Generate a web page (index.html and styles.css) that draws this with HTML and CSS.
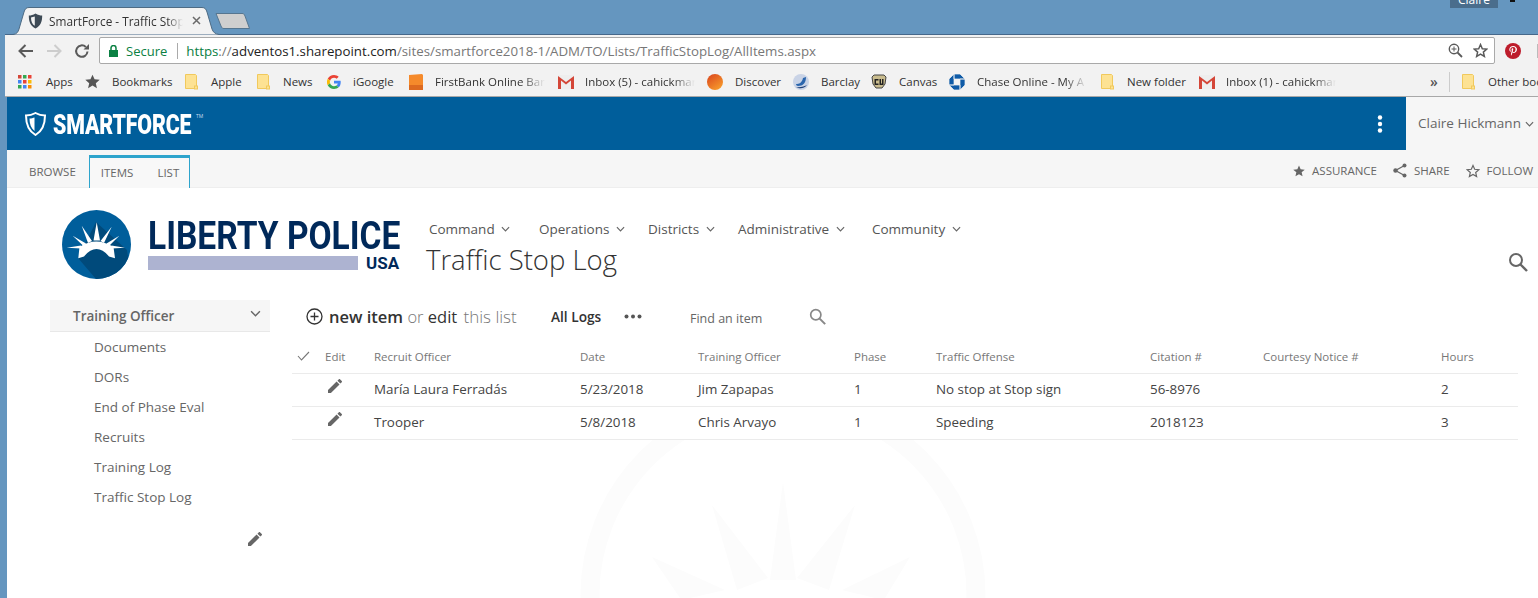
FILE: index.html

```html
<!DOCTYPE html>
<html lang="en">
<head>
<meta charset="UTF-8">
<title>SmartForce - Traffic Stop Log</title>
<link rel="stylesheet" href="styles.css">
</head>
<body>
<svg class="defs" width="0" height="0">
  <symbol id="pencil" viewBox="3 3 18 18"><path d="M3 17.25V21h3.75L17.81 9.94l-3.75-3.75L3 17.25zM20.71 7.04c.39-.39.39-1.02 0-1.41l-2.34-2.34c-.39-.39-1.02-.39-1.41 0l-1.83 1.83 3.75 3.75 1.83-1.83z"/></symbol>
  <symbol id="folder" viewBox="0 0 13 16"><path d="M.5.5h10l1 1v13h-11z" fill="#fde293" stroke="#f1c95c"/><rect x="9.5" y="12" width="3" height="3" fill="#fde293" stroke="#f1c95c"/></symbol>
  <symbol id="gmail" viewBox="0 0 16 14"><path d="M0 0h16v14H0z" fill="#eee"/><path d="M0 14V1l8 6 8-6v13h-3V5.500L8 9.500 3 5.500V14z" fill="#d44638"/></symbol>
  <symbol id="chev" viewBox="0 0 10 6"><path d="M1 1l4 4 4-4" fill="none" stroke="currentColor" stroke-width="1.300"/></symbol>
  <symbol id="lens" viewBox="0 0 20 20"><circle cx="8" cy="8" r="6" fill="none" stroke="currentColor" stroke-width="2"/><path d="M12.500 12.500L19 19" stroke="currentColor" stroke-width="2.400"/></symbol>
</svg>

<div class="tabstrip">
  <div class="tab">
    <svg class="tab-shape" width="206" height="28" viewBox="0 0 206 28"><path d="M0 27.500C4 27 5 25 6 22L11 5C12 2 13 .5 16 .5H189C192 .5 193 2 194 5L199 22C200 25 202 27 206 27.500" fill="#f2f2f2" stroke="#4d6b84"/></svg>
    <svg class="favicon" width="15" height="16" viewBox="0 0 15 16"><path d="M7.500.5C5 2 3 2.500.8 2.500.8 9 2.500 13 7.500 15.500 12.500 13 14.200 9 14.200 2.500 12 2.500 10 2 7.500.5z" fill="#3d4a55"/><path d="M6.800 3.500C5.500 4 4.300 4.300 3 4.400 3 8.500 4.200 11 6.800 12.800z" fill="#f2f2f2"/></svg>
    <span class="tab-title">SmartForce - Traffic Stop</span>
    <svg class="tab-x" width="9" height="9" viewBox="0 0 9 9"><path d="M1 1l7 7M8 1L1 8" stroke="#6a6a6a" stroke-width="1.500"/></svg>
  </div>
  <svg class="newtab" width="36" height="18" viewBox="0 0 36 18"><path d="M1 1.500H27C29 1.500 29 2 30 4L34.500 16.500H9C7 16.500 7 16 6 14z" fill="#cfcfcf" stroke="#567690"/></svg>
  <div class="win-user">Claire</div>
  <div class="win-btn"></div>
</div>

<div class="toolbar">
  <svg class="nav-ic" width="16" height="14" viewBox="0 0 16 14"><path d="M15 7H2M7.500 1L1.500 7l6 6" fill="none" stroke="#5a5a5a" stroke-width="2"/></svg>
  <svg class="nav-ic" width="16" height="14" viewBox="0 0 16 14"><path d="M1 7h13M8.500 1l6 6-6 6" fill="none" stroke="#cdcdcd" stroke-width="2"/></svg>
  <svg class="nav-ic" width="16" height="16" viewBox="0 0 16 16"><path d="M13.500 8.500A5.700 5.700 0 1 1 11.800 4" fill="none" stroke="#5a5a5a" stroke-width="2"/><path d="M9.500 6.500H15V1z" fill="#5a5a5a"/></svg>
  <div class="omnibox">
    <svg class="lock" width="9" height="12" viewBox="0 0 9 12"><path d="M0 5h9v7H0z" fill="#0b8043"/><path d="M2 5V3a2.500 2.500 0 0 1 5 0v2" fill="none" stroke="#0b8043" stroke-width="1.500"/></svg>
    <span class="secure">Secure</span>
    <span class="omni-sep"></span>
    <span class="url"><span class="url-scheme">https</span>://<span class="url-host">adventos1.sharepoint.com</span>/sites/smartforce2018-1/ADM/TO/Lists/TrafficStopLog/AllItems.aspx</span>
    <svg class="omni-zoom" width="15" height="15" viewBox="0 0 15 15"><circle cx="6" cy="6" r="4.700" fill="none" stroke="#5a5a5a" stroke-width="1.400"/><path d="M9.500 9.500L14 14" stroke="#5a5a5a" stroke-width="1.800"/><path d="M3.500 6h5M6 3.500v5" stroke="#5a5a5a"/></svg>
    <svg class="omni-star" width="15" height="15" viewBox="0 0 24 24"><path d="M12 2.500l2.900 6.600 7.100.7-5.400 4.700 1.600 7-6.200-3.700-6.200 3.700 1.600-7L2 9.800l7.100-.7z" fill="none" stroke="#5a5a5a" stroke-width="2.400"/></svg>
  </div>
  <svg class="pin" width="16" height="16" viewBox="0 0 16 16"><circle cx="8" cy="8" r="8" fill="#bd1c2b"/><path d="M8.300 3C5.800 3 4.300 4.700 4.300 6.500c0 1 .5 1.900 1.200 2.200.3.100.4-.3.400-.6-.5-.6-.6-1-.6-1.500 0-1.500 1.200-2.600 2.800-2.600 1.500 0 2.400.9 2.400 2.200 0 1.600-.7 2.900-1.800 2.900-.6 0-1-.5-.9-1.100.2-.7.5-1.400.5-1.900 0-1.200-1.700-1-1.700.6 0 .5.200.9.200.9l-.8 3.100c-.1.700-.1 1.500 0 2 .5-.5 1-1.400 1.200-2.100l.4-1.400c.2.400.8.700 1.400.7 1.800 0 3-1.600 3-3.800C11.800 4.400 10.300 3 8.300 3z" fill="#fff"/></svg>
  <span class="ext"></span>
</div>

<div class="bookmarks">
  <div class="bm">
    <svg class="bm-ic" width="14" height="14" viewBox="0 0 14 14"><path d="M0 0h3.500v3.500H0z" fill="#d44638"/><path d="M5 0h3.500v3.500H5z" fill="#34a853"/><path d="M10 0h3.500v3.500H10z" fill="#ea4335"/><path d="M0 5h3.500v3.500H0z" fill="#4285f4"/><path d="M5 5h3.500v3.500H5z" fill="#ea4335"/><path d="M10 5h3.500v3.500H10z" fill="#fbbc05"/><path d="M0 10h3.500v3.500H0z" fill="#34a853"/><path d="M5 10h3.500v3.500H5z" fill="#4285f4"/><path d="M10 10h3.500v3.500H10z" fill="#fb8c00"/></svg>
    <span class="bm-text gap-apps">Apps</span>
  </div>
  <div class="bm">
    <svg class="bm-ic" width="15" height="15" viewBox="0 0 24 24"><path d="M12 1l3.300 7.500 8.200.8-6.200 5.400 1.800 8L12 18.500 4.900 22.700l1.800-8L.5 9.300l8.200-.8z" fill="#555"/></svg>
    <span class="bm-text">Bookmarks</span>
  </div>
  <div class="bm"><svg class="bm-ic" width="13" height="16"><use href="#folder"/></svg><span class="bm-text gap-wide">Apple</span></div>
  <div class="bm"><svg class="bm-ic" width="13" height="16"><use href="#folder"/></svg><span class="bm-text gap-wide">News</span></div>
  <div class="bm">
    <svg class="bm-ic" width="14" height="14" viewBox="0 0 48 48"><path d="M24 9.500c3.500 0 6.700 1.200 9.200 3.600l6.800-6.800C35.900 2.400 30.500 0 24 0 14.600 0 6.500 5.400 2.600 13.200l8 6.200C12.400 13.700 17.700 9.500 24 9.500z" fill="#ea4335"/><path d="M47 24.500c0-1.600-.1-3.100-.4-4.500H24v9h12.900c-.6 3-2.200 5.500-4.700 7.200l7.700 6C44.400 38 47 31.800 47 24.500z" fill="#4285f4"/><path d="M10.500 28.600a14.400 14.400 0 0 1 0-9.200l-8-6.200a24 24 0 0 0 0 21.600z" fill="#fbbc05"/><path d="M24 48c6.500 0 11.900-2.100 15.900-5.800l-7.700-6c-2.200 1.500-4.900 2.300-8.200 2.300-6.300 0-11.600-4.200-13.500-9.900l-8 6.200C6.500 42.600 14.600 48 24 48z" fill="#34a853"/></svg>
    <span class="bm-text">iGoogle</span>
  </div>
  <div class="bm">
    <svg class="bm-ic" width="15" height="16" viewBox="0 0 15 16"><path d="M1 1l13-1 1 1v15H1z" fill="#f58a2b"/><path d="M1 11h14v5H1z" fill="#dd6a20"/></svg>
    <span class="bm-text fade bw-first">FirstBank Online Ban</span>
  </div>
  <div class="bm"><svg class="bm-ic" width="16" height="14"><use href="#gmail"/></svg><span class="bm-text fade bw-inbox">Inbox (5) - cahickmar</span></div>
  <div class="bm">
    <svg class="bm-ic" width="16" height="16" viewBox="0 0 16 16"><defs><linearGradient id="disc" x1="0" y1="0" x2=".7" y2="1"><stop offset="0" stop-color="#d9431e"/><stop offset="1" stop-color="#f79a2a"/></linearGradient></defs><circle cx="8" cy="8" r="8" fill="url(#disc)"/></svg>
    <span class="bm-text">Discover</span>
  </div>
  <div class="bm">
    <svg class="bm-ic" width="16" height="16" viewBox="0 0 16 16"><circle cx="8" cy="8" r="8" fill="#c9d3e6"/><path d="M3 10c3 0 6-1 7-6l3-1c0 6-3 9-8 9-1 0-2-1-2-2z" fill="#2b66ad"/><path d="M3 13c3 2 8 2 11-2-2 1-7 3-11 2z" fill="#1c3f78"/></svg>
    <span class="bm-text">Barclay</span>
  </div>
  <div class="bm">
    <svg class="bm-ic" width="16" height="16" viewBox="0 0 16 16"><path d="M1 3l2-2h10l2 2-1 7-3 4H5l-3-4z" fill="#c9bc8e" stroke="#444"/><path d="M3.500 5h4v1.500H5v3h2.500V11h-4zM8.500 5h1.500v4.500h1V5h1.500v6h-4z" fill="#222"/></svg>
    <span class="bm-text">Canvas</span>
  </div>
  <div class="bm">
    <svg class="bm-ic" width="16" height="16" viewBox="0 0 16 16"><path d="M5 0H11L16 5H5zM16 5V11L11 16V5zM11 16H5L0 11H11zM0 11V5L5 0V11z" fill="#0f5ba7" stroke="#f2f2f2" stroke-width=".7"/></svg>
    <span class="bm-text fade bw-chase">Chase Online - My A</span>
  </div>
  <div class="bm"><svg class="bm-ic" width="13" height="16"><use href="#folder"/></svg><span class="bm-text gap-wide">New folder</span></div>
  <div class="bm"><svg class="bm-ic" width="16" height="14"><use href="#gmail"/></svg><span class="bm-text fade bw-inbox">Inbox (1) - cahickmar</span></div>
  <span class="bm-more">»</span>
  <span class="bm-sep"></span>
  <div class="bm"><svg class="bm-ic" width="13" height="16"><use href="#folder"/></svg><span class="bm-text gap-wide">Other book</span></div>
</div>

<div class="page">
  <svg class="watermark" width="500" height="158" viewBox="533 440 500 158">
    <circle cx="783" cy="595" r="193" fill="none" stroke="#fcfcfc" stroke-width="19"/>
    <path d="M783 482L796 580H770zM712 505L768 578 737 590zM855 505L829 590 797 578zM652 557L725 590 690 598H680zM910 557L885 598H875L842 590z" fill="#fcfcfc"/>
  </svg>

  <div class="suite-bar">
    <div class="suite-logo">
      <svg width="21" height="24" viewBox="0 0 21 24"><path d="M10.500 1C7 3 4 3.500 1 3.500 1 13 3.500 19 10.500 23 17.500 19 20 13 20 3.500 17 3.500 14 3 10.500 1z" fill="none" stroke="#fff" stroke-width="2"/><path d="M9.500 5.500C8 6 6.500 6.500 4.500 6.500 4.500 12 6 16 9.500 19z" fill="#fff"/></svg>
      <span class="suite-name">SMARTFORCE</span><span class="suite-tm">TM</span>
    </div>
    <svg class="suite-dots" width="6" height="18" viewBox="0 0 6 18"><circle cx="3" cy="2.500" r="2.200" fill="#fff"/><circle cx="3" cy="9" r="2.200" fill="#fff"/><circle cx="3" cy="15.500" r="2.200" fill="#fff"/></svg>
    <div class="suite-user">Claire Hickmann <svg class="user-chev" width="9" height="6"><use href="#chev"/></svg></div>
  </div>

  <div class="ribbon">
    <a class="rib-tab rib-browse">BROWSE</a>
    <div class="rib-group"><a class="rib-tab">ITEMS</a><a class="rib-tab">LIST</a></div>
    <div class="rib-actions">
      <a class="rib-act"><svg width="12" height="12" viewBox="0 0 24 24"><path d="M12 1l3.300 7.500 8.200.8-6.200 5.400 1.800 8L12 18.500 4.900 22.700l1.800-8L.5 9.300l8.200-.8z" fill="#666"/></svg>ASSURANCE</a>
      <a class="rib-act"><svg width="14" height="15" viewBox="0 0 14 15"><path d="M11.500 2.500L2.500 7.500l9 5" fill="none" stroke="#666" stroke-width="1.300"/><circle cx="11.500" cy="2.500" r="2" fill="#666"/><circle cx="2.500" cy="7.500" r="2.200" fill="#666"/><circle cx="11.500" cy="12.500" r="2" fill="#666"/></svg>SHARE</a>
      <a class="rib-act"><svg width="14" height="14" viewBox="0 0 24 24"><path d="M12 2.500l2.900 6.600 7.100.7-5.400 4.700 1.600 7-6.200-3.700-6.200 3.700 1.600-7L2 9.800l7.100-.7z" fill="none" stroke="#666" stroke-width="2"/></svg>FOLLOW</a>
    </div>
  </div>

  <div class="brand">
    <svg class="seal" width="69" height="69" viewBox="0 0 69 69">
      <defs><clipPath id="sealclip"><circle cx="34.500" cy="34.500" r="34.500"/></clipPath></defs>
      <circle cx="34.500" cy="34.500" r="34.500" fill="#005e9b"/>
      <path d="M34 12L65 40 69 69H34L16 48z" fill="#004a7b" clip-path="url(#sealclip)"/>
      <path d="M34.700 12.300L38 30.500H31.500zM19.700 15.700L30 31 26 33zM49.700 16.700L42 33 38.500 31zM10.700 25.700L24 33.500 21.500 36zM57.300 25.700L47 36 44.500 33.500zM4.700 37.700L19 35.500 19.500 38.500zM63 37.700L49.500 38.500 49.500 35.500z" fill="#fff"/>
      <path d="M17.500 37Q34 26 51.500 37L53 48.300 47 46.500Q41 39 34.500 39 28 39 22 46.500L16.300 48.300z" fill="#fff"/>
    </svg>
    <div class="lockup">
      <div class="lockup-name"><span>LIBERTY POLICE</span></div>
      <div class="lockup-sub"><span class="lockup-bar"></span><span class="lockup-usa">USA</span></div>
    </div>
    <div class="site-head">
      <nav class="topnav">
        <a>Command <svg width="9" height="6"><use href="#chev"/></svg></a>
        <a>Operations <svg width="9" height="6"><use href="#chev"/></svg></a>
        <a>Districts <svg width="9" height="6"><use href="#chev"/></svg></a>
        <a>Administrative <svg width="9" height="6"><use href="#chev"/></svg></a>
        <a>Community <svg width="9" height="6"><use href="#chev"/></svg></a>
      </nav>
      <h1 class="page-title">Traffic Stop Log</h1>
    </div>
    <svg class="site-search" width="20" height="20"><use href="#lens"/></svg>
  </div>

  <div class="content">
    <aside class="sidenav">
      <div class="side-head">Training Officer <svg width="11" height="7"><use href="#chev"/></svg></div>
      <a class="side-link">Documents</a>
      <a class="side-link">DORs</a>
      <a class="side-link">End of Phase Eval</a>
      <a class="side-link">Recruits</a>
      <a class="side-link">Training Log</a>
      <a class="side-link">Traffic Stop Log</a>
      <div class="side-edit"><svg width="14" height="14" fill="#666"><use href="#pencil"/></svg></div>
    </aside>

    <main class="list">
      <div class="list-tools">
        <svg class="plus" width="17" height="17" viewBox="0 0 17 17"><circle cx="8.500" cy="8.500" r="7.500" fill="none" stroke="#333" stroke-width="1.300"/><path d="M8.500 4.500v8M4.500 8.500h8" stroke="#333" stroke-width="1.300"/></svg>
        <span class="hero"><b>new item</b> <i>or</i> <span class="hero-edit">edit</span> <i class="hero-list">this list</i></span>
        <span class="view-name">All Logs</span>
        <svg class="view-more" width="18" height="5" viewBox="0 0 18 5"><circle cx="2.500" cy="2.500" r="2" fill="#555"/><circle cx="9" cy="2.500" r="2" fill="#555"/><circle cx="15.500" cy="2.500" r="2" fill="#555"/></svg>
        <span class="find">Find an item</span>
        <svg class="find-ic" width="17" height="17"><use href="#lens"/></svg>
      </div>
      <table class="grid">
        <thead>
          <tr>
            <th class="c-check"><svg width="13" height="10" viewBox="0 0 13 10"><path d="M1 5l3.500 4L12 1" fill="none" stroke="#777" stroke-width="1.100"/></svg></th>
            <th class="c-edit">Edit</th>
            <th class="c-recruit">Recruit Officer</th>
            <th class="c-date">Date</th>
            <th class="c-officer">Training Officer</th>
            <th class="c-phase">Phase</th>
            <th class="c-offense">Traffic Offense</th>
            <th class="c-citation">Citation #</th>
            <th class="c-notice">Courtesy Notice #</th>
            <th class="c-hours">Hours</th>
          </tr>
        </thead>
        <tbody>
          <tr>
            <td></td>
            <td class="pen"><svg width="14" height="14"><use href="#pencil"/></svg></td>
            <td>María Laura Ferradás</td>
            <td>5/23/2018</td>
            <td>Jim Zapapas</td>
            <td>1</td>
            <td>No stop at Stop sign</td>
            <td>56-8976</td>
            <td></td>
            <td>2</td>
          </tr>
          <tr>
            <td></td>
            <td class="pen"><svg width="14" height="14"><use href="#pencil"/></svg></td>
            <td>Trooper</td>
            <td>5/8/2018</td>
            <td>Chris Arvayo</td>
            <td>1</td>
            <td>Speeding</td>
            <td>2018123</td>
            <td></td>
            <td>3</td>
          </tr>
        </tbody>
      </table>
    </main>
  </div>
</div>
</body>
</html>
```

FILE: styles.css

```css
* { box-sizing: border-box; }
html, body { margin: 0; height: 598px; overflow: hidden; }
body { background: #6596bf; font-family: "Open Sans", "Noto Sans", sans-serif; color: #444; position: relative; }
a { color: inherit; text-decoration: none; }
.defs { position: absolute; }

/* browser chrome */
.tabstrip { height: 34px; display: flex; padding-left: 13px; }
.tab { position: relative; width: 204px; height: 28px; margin-top: 7px; display: flex; align-items: center; padding: 0 0 1px 15px; z-index: 2; }
.tab-shape { position: absolute; left: 0; top: 0; }
.favicon, .tab-title, .tab-x { position: relative; }
.tab-title { margin-left: 6px; font-size: 11.800px; color: #333; width: 134px; white-space: nowrap; overflow: hidden; -webkit-mask-image: linear-gradient(to right, #000 88%, transparent); mask-image: linear-gradient(to right, #000 88%, transparent); }
.tab-x { margin-left: 9px; }
.newtab { margin: 12px 0 0 -2px; }
.win-user { margin-left: auto; width: 48px; height: 8px; background: #4a6d8c; color: #fff; font-size: 12px; line-height: 0; text-align: center; }
.win-btn { width: 5px; height: 2px; background: #111; margin: 0 23px 0 12px; }

.toolbar { margin-left: 5px; height: 33px; background: #f2f2f2; border-top: 1px solid #46688a; display: flex; align-items: center; padding: 0 0 1px 13px; }
.nav-ic { margin-right: 12px; flex: none; }
.omnibox { margin-left: -3px; width: 1396px; height: 27px; background: #fff; border: 1px solid #a9a9a9; border-radius: 2px; display: flex; align-items: center; padding-left: 9px; flex: none; }
.lock { flex: none; }
.secure { margin-left: 8px; font-size: 13px; color: #0b8043; }
.omni-sep { width: 1px; height: 16px; background: #aaa; margin: 0 8px 0 10px; }
.url { font-size: 13.300px; color: #777; white-space: nowrap; }
.url-scheme { color: #0b8043; }
.url-host { color: #222; }
.omni-zoom { margin-left: auto; }
.omni-star { margin: 0 6px 0 10px; }
.pin { margin-left: 10px; flex: none; }
.ext { width: 2px; height: 14px; margin-left: 16px; background: #bbb; flex: none; }

.bookmarks { margin-left: 5px; height: 30px; background: #f2f2f2; border-bottom: 1px solid #a8a8a8; display: grid; grid-template-columns: 67px 100px 72px 70px 81px 150px 149px 86px 78px 78px 152px 98px 231px 19px 13px auto; align-items: center; padding: 0 0 0 13px; overflow: hidden; }
.bm { display: flex; align-items: center; white-space: nowrap; min-width: 0; }
.bm-ic { flex: none; }
.bm-text { margin-left: 12px; font-size: 11.500px; color: #333; }
.gap-apps { margin-left: 14px; }
.gap-wide { margin-left: 13px; }
.fade { overflow: hidden; -webkit-mask-image: linear-gradient(to right, #000 80%, transparent); mask-image: linear-gradient(to right, #000 80%, transparent); }
.bw-first { width: 110px; }
.bw-inbox { width: 110px; margin-left: 11px; }
.bw-chase { width: 110px; }
.bm-more { font-size: 14px; color: #555; font-weight: 600; line-height: 1; }
.bm-sep { width: 1px; height: 20px; background: #ccc; }

/* sharepoint page */
.page { position: relative; margin-left: 7px; height: 501px; background: #fff; overflow: hidden; }
.watermark { position: absolute; left: 526px; top: 343px; }

.suite-bar { height: 53px; background: #005e9b; display: flex; align-items: center; position: relative; padding-left: 18px; padding-right: 132px; }
.suite-logo { display: flex; align-items: center; color: #fff; }
.suite-name { display: block; width: 141px; margin: 2px 0 0 7px; font-family: "Roboto", sans-serif; font-weight: 900; font-size: 27px; letter-spacing: -.2px; white-space: nowrap; transform: scaleX(.79); transform-origin: left center; }
.suite-tm { font-size: 5px; margin: -16px 0 0 2px; color: #cde; }
.suite-dots { margin-left: auto; margin-right: 23px; }
.suite-user { position: absolute; right: 0; top: 0; width: 132px; height: 53px; background: #f6f6f6; color: #666; font-size: 13.500px; line-height: 53px; padding-left: 12px; white-space: nowrap; }
.user-chev { color: #666; margin-left: 1px; vertical-align: 1px; }

.ribbon { height: 38px; background: #f6f6f6; border-bottom: 1px solid #eee; display: flex; align-items: flex-end; font-size: 11.500px; color: #666; }
.rib-tab { display: block; height: 31px; line-height: 31px; padding: 0 12px; }
.rib-browse { margin-left: 10px; }
.rib-group { display: flex; height: 33px; margin-left: 1px; margin-bottom: -1px; border: 1px solid #2ea4cc; border-top-width: 3px; border-bottom: 0; background: #f8f8f8; }
.rib-group .rib-tab { height: 30px; line-height: 30px; padding: 0 11px; }
.rib-group .rib-tab + .rib-tab { padding: 0 10px 0 13px; }
.rib-actions { margin-left: auto; display: flex; align-self: stretch; align-items: center; padding: 4px 5px 0 0; }
.rib-act { display: flex; align-items: center; margin-left: 16px; }
.rib-act svg { margin-right: 7px; }

.brand { height: 112px; display: flex; padding-left: 55px; position: relative; }
.seal { margin-top: 22px; flex: none; }
.lockup { margin: 33px 0 0 17px; width: 253px; flex: none; color: #00295a; }
.lockup-name { height: 31px; line-height: 31px; font-family: "Roboto", sans-serif; font-weight: 700; font-size: 39px; white-space: nowrap; }
.lockup-name span { display: inline-block; transform: scaleX(.86); transform-origin: left center; }
.lockup-sub { display: flex; margin-top: 4px; }
.lockup-bar { width: 210px; height: 14px; background: #adb3d1; margin-left: 0; }
.lockup-usa { font-family: "Roboto", sans-serif; font-weight: 700; font-size: 17px; line-height: 15px; margin-left: 8px; }
.site-head { margin-left: 25px; }
.topnav { display: grid; grid-template-columns: 110px 109px 90px 134px auto; margin-top: 31px; padding-left: 3px; font-size: 13.500px; color: #555; line-height: 20px; white-space: nowrap; }
.topnav svg { color: #666; margin-left: 3px; vertical-align: 2px; }
.page-title { margin: 3px 0 0; font-weight: 300; font-size: 27.500px; line-height: 36px; color: #333; white-space: nowrap; }
.site-search { position: absolute; right: 10px; top: 64px; color: #666; }

.content { display: flex; }
.sidenav { width: 220px; margin-left: 43px; flex: none; position: relative; color: #666; }
.side-head { height: 32px; background: #f6f6f6; border-bottom: 1px solid #e8e8e8; font-size: 13.500px; font-weight: 600; line-height: 33px; padding-left: 23px; position: relative; }
.side-head svg { position: absolute; right: 9px; top: 10px; }
.side-link { display: block; height: 30px; line-height: 30px; padding-left: 44px; font-size: 13.500px; white-space: nowrap; }
.side-edit { text-align: right; padding: 17px 8px 0 0; }

.list { margin-left: 22px; width: 1226px; flex: none; position: relative; }
.list-tools { height: 37px; display: flex; align-items: center; padding: 0 0 4px 14px; white-space: nowrap; }
.plus { flex: none; }
.hero { margin-left: 6px; font-size: 16.500px; color: #333; font-weight: 300; }
.hero b { font-weight: 600; }
.hero i { font-style: normal; color: #777; }
.hero .hero-list { font-size: 17px; margin-left: 2px; }
.hero-edit { font-weight: 400; }
.view-name { position: absolute; left: 259px; font-size: 13.700px; font-weight: 600; color: #333; }
.view-more { position: absolute; left: 332px; }
.find { position: absolute; left: 398px; top: 10px; font-size: 12.500px; color: #666; }
.find-ic { position: absolute; left: 517px; color: #888; }

.grid { width: 1226px; border-collapse: separate; border-spacing: 0; table-layout: fixed; background: #fff; position: relative; margin-top: 3px; }
.grid th { height: 34px; padding: 0 0 0 5px; text-align: left; font-size: 11.500px; font-weight: 400; color: #777; border-bottom: 1px solid #ebebeb; white-space: nowrap; }
.grid td { height: 33px; padding: 0 0 2px 5px; font-size: 13.400px; color: #444; border-bottom: 1px solid #ebebeb; white-space: nowrap; }
.c-check { width: 28px; }
.c-edit { width: 49px; }
.c-recruit { width: 206px; }
.c-date { width: 118px; }
.c-officer { width: 156px; }
.c-phase { width: 82px; }
.c-offense { width: 214px; }
.c-citation { width: 113px; }
.c-notice { width: 178px; }
.grid .pen { fill: #666; padding-left: 8px; padding-bottom: 5px; }
```
